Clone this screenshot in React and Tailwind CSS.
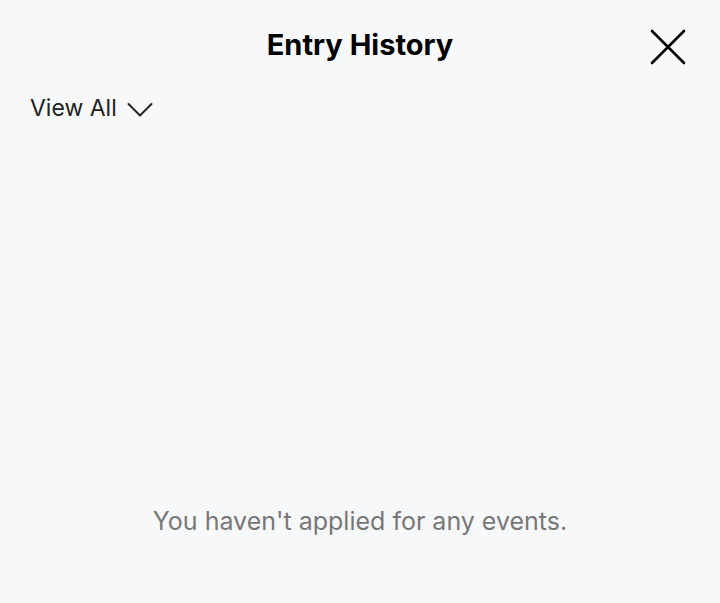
import React from "react";

export default function App() {
  return (
    <div
      className="w-[720px] h-[603px] bg-[#f7f8fa] flex flex-col text-[#111]"
      style={{ fontFamily: "Inter, 'Noto Sans', sans-serif" }}
    >
      {/* Header */}
      <div className="relative h-[90px] flex items-center justify-center">
        <h1 className="text-[29px] font-bold text-black">Entry History</h1>
        <button className="absolute right-[34px] top-[29px] w-[36px] h-[36px] flex items-center justify-center">
          <svg width="36" height="36" viewBox="0 0 36 36" fill="none">
            <path
              d="M2 2L34 34M34 2L2 34"
              stroke="#000"
              strokeWidth="2.6"
              strokeLinecap="round"
            />
          </svg>
        </button>
      </div>

      {/* Filter */}
      <div className="px-[30px] flex items-center gap-[10px] mt-[1px]">
        <span className="text-[23px] text-[#222]">View All</span>
        <svg width="26" height="16" viewBox="0 0 26 16" fill="none" className="mt-[3px]">
          <path
            d="M1.5 2L13 13.5L24.5 2"
            stroke="#222"
            strokeWidth="2"
            strokeLinecap="round"
            strokeLinejoin="round"
          />
        </svg>
      </div>

      {/* Empty state */}
      <div className="flex-1 flex items-end justify-center pb-[63px]">
        <p className="text-[25px] text-[#777]">You haven't applied for any events.</p>
      </div>
    </div>
  );
}
